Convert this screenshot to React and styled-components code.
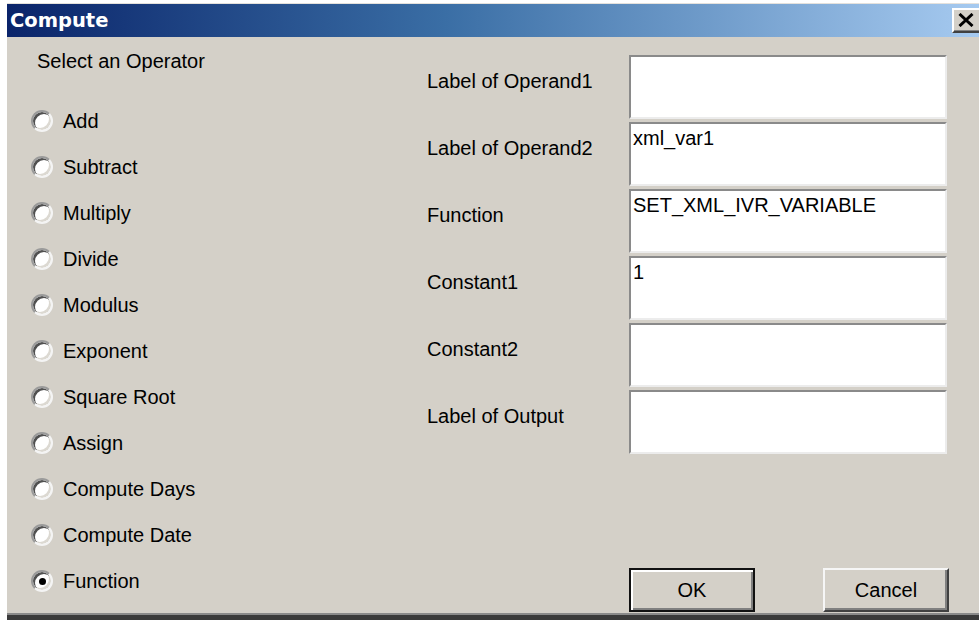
import React, {useState} from 'react'
import styled, {createGlobalStyle} from 'styled-components'

const GlobalStyle = createGlobalStyle`
    html, body {
        margin: 0;
        padding: 0;
        background: #ffffff;
        overflow: hidden;
    }
    body {
        font-family: "Liberation Sans", Arial, sans-serif;
        font-size: 20px;
        color: #000;
    }
`

const Window = styled.div`
    margin: 3px 0 0 7px;
    height: 617px;
    box-sizing: border-box;
    display: flex;
    flex-direction: column;
    background: #d4d0c8;
    border-top: 1px solid #e4e1dc;
    border-bottom: 5px solid #3a3a3a;
    box-shadow: inset 0 -2px 0 #8a8a8a;
`

const TitleBar = styled.div`
    height: 33px;
    flex-shrink: 0;
    display: flex;
    align-items: center;
    justify-content: space-between;
    padding-left: 3px;
    background: linear-gradient(to right, #0a246a 0%, #3a6ea5 45%, #a6caf0 100%);
`

const Title = styled.span`
    font-family: "DejaVu Sans", Verdana, sans-serif;
    font-weight: bold;
    font-size: 19.5px;
    color: #ffffff;
`

const CloseButton = styled.div`
    width: 27px;
    height: 25px;
    box-sizing: border-box;
    background: #d4d0c8;
    border-top: 2px solid #ffffff;
    border-left: 2px solid #ffffff;
    border-bottom: 2px solid #404040;
    box-shadow: inset 0 -1px 0 #808080;
    display: flex;
    align-items: center;
    padding: 0 0 1px 4px;
`

const Body = styled.div`
    flex: 1;
    display: grid;
    grid-template-columns: 420px 1fr;
`

const LeftPane = styled.div`
    display: flex;
    flex-direction: column;
    padding: 12px 0 0 24px;
`

const Heading = styled.div`
    line-height: 24px;
    padding-left: 6px;
    margin-bottom: 25px;
`

const RadioRow = styled.label`
    height: 46px;
    display: flex;
    align-items: center;
    gap: 10px;
    cursor: default;
`

const RadioCircle = styled.span`
    position: relative;
    width: 22px;
    height: 22px;
    box-sizing: border-box;
    border-radius: 50%;
    background: #ffffff;
    border: 2px solid;
    border-color: #9a9a9a #f4f4f4 #f4f4f4 #9a9a9a;
    box-shadow: inset 2px 2px 0 #505050, inset -2px -2px 0 #dcd9d2;
    flex-shrink: 0;

    &::after {
        content: '';
        display: ${p => (p.$checked ? 'block' : 'none')};
        position: absolute;
        left: 50%;
        top: 50%;
        width: 7px;
        height: 7px;
        margin: -3.5px 0 0 -3.5px;
        border-radius: 50%;
        background: #000;
    }
`

const RightPane = styled.div`
    display: flex;
    flex-direction: column;
    padding-top: 18px;
`

const Fields = styled.div`
    display: grid;
    grid-template-columns: 202px 318px;
    grid-auto-rows: 64px;
    row-gap: 3px;
`

const FieldLabel = styled.div`
    line-height: 24px;
    padding-top: 14px;
`

const TextBox = styled.div`
    box-sizing: border-box;
    background: #ffffff;
    border-top: 2px solid #8a8a8a;
    border-left: 2px solid #8a8a8a;
    border-right: 2px solid #ececec;
    border-bottom: 2px solid #ececec;
    padding: 2px 2px;
    line-height: 24px;
    white-space: nowrap;
    overflow: hidden;
`

const ButtonRow = styled.div`
    margin-top: auto;
    margin-bottom: 3px;
    margin-left: 202px;
    width: 320px;
    display: flex;
    justify-content: space-between;
`

const Button = styled.div`
    width: 126px;
    height: 44px;
    box-sizing: border-box;
    display: flex;
    align-items: center;
    justify-content: center;
    background: #d4d0c8;
    border: 2px solid;
    border-color: ${p => (p.$default ? '#111' : '#f6f6f6 #404040 #404040 #f6f6f6')};
    box-shadow: ${p => (p.$default
        ? 'inset 2px 2px 0 #ffffff, inset -2px -2px 0 #808080'
        : 'inset -2px -2px 0 #808080')};
`

const operators = [
    'Add', 'Subtract', 'Multiply', 'Divide', 'Modulus', 'Exponent',
    'Square Root', 'Assign', 'Compute Days', 'Compute Date', 'Function',
]

const fields = [
    {label: 'Label of Operand1', value: ''},
    {label: 'Label of Operand2', value: 'xml_var1'},
    {label: 'Function', value: 'SET_XML_IVR_VARIABLE'},
    {label: 'Constant1', value: '1'},
    {label: 'Constant2', value: ''},
    {label: 'Label of Output', value: ''},
]

// the bold X glyph of the caption close button
const CloseGlyph = () => (
    <svg width="16" height="14" viewBox="0 0 16 14">
        <path d="M1.5 1 L14.5 13 M14.5 1 L1.5 13" stroke="#000" strokeWidth="3" />
    </svg>
)

const App = () => {
    const [operator, setOperator] = useState('Function')

    return (
        <>
            <GlobalStyle />
            <Window>
                <TitleBar>
                    <Title>Compute</Title>
                    <CloseButton><CloseGlyph /></CloseButton>
                </TitleBar>
                <Body>
                    <LeftPane>
                        <Heading>Select an Operator</Heading>
                        {operators.map(op => (
                            <RadioRow key={op} onClick={() => setOperator(op)}>
                                <RadioCircle $checked={operator === op} />
                                {op}
                            </RadioRow>
                        ))}
                    </LeftPane>
                    <RightPane>
                        <Fields>
                            {fields.map(f => (
                                <React.Fragment key={f.label}>
                                    <FieldLabel>{f.label}</FieldLabel>
                                    <TextBox>{f.value}</TextBox>
                                </React.Fragment>
                            ))}
                        </Fields>
                        <ButtonRow>
                            <Button $default>OK</Button>
                            <Button>Cancel</Button>
                        </ButtonRow>
                    </RightPane>
                </Body>
            </Window>
        </>
    )
}

export default App
